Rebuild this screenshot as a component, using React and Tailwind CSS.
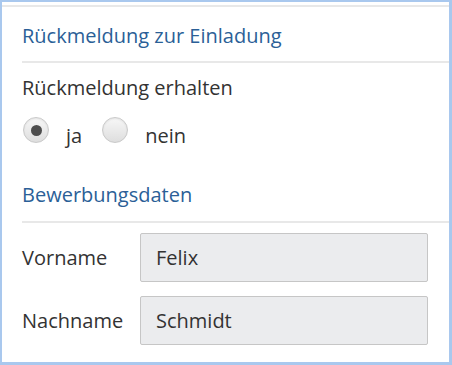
import React, { useState } from 'react';

const font = { fontFamily: '"Open Sans", "Noto Sans", sans-serif' };

function Radio({ checked, label, onClick }) {
  return (
    <button onClick={onClick} className="flex items-center">
      <span className="w-[26px] h-[26px] rounded-full border border-[#c9c9c9] bg-gradient-to-b from-[#f7f7f7] to-[#dedede] shadow-[inset_0_1px_2px_rgba(0,0,0,0.08)] flex items-center justify-center">
        {checked && <span className="w-[11px] h-[11px] rounded-full bg-[#4d4d4d]" />}
      </span>
      <span className="ml-[17px] translate-y-[6px] text-[20px] leading-[24px] text-[#333]">{label}</span>
    </button>
  );
}

function Field({ label, value }) {
  return (
    <div className="flex items-center">
      <span className="w-[118px] text-[20px] leading-[24px] text-[#333]">{label}</span>
      <div className="w-[288px] h-[49px] rounded-[2px] border border-[#c6c6c6] bg-[#ebecee] flex items-center px-[15px] text-[20px] leading-[24px] text-[#333]">
        {value}
      </div>
    </div>
  );
}

export default function App() {
  const [answer, setAnswer] = useState('ja');

  return (
    <div style={font} className="w-[452px] h-[365px] bg-white border-l-2 border-t-2 border-r-[3px] border-b-[3px] border-[#a9c8ee] overflow-hidden">
      <div className="mt-[3px] border-t-2 border-[#e8e8e8]">
        <div className="pl-[20px]">
          <h2 className="pt-[17px] pb-[13px] text-[20px] leading-[24px] text-[#2b5f97] border-b-2 border-[#e8e8e8]">
            Rückmeldung zur Einladung
          </h2>
          <p className="mt-[13px] text-[20px] leading-[24px] text-[#333]">Rückmeldung erhalten</p>
          <div className="mt-[17px] flex items-center gap-[20px] pl-[1px]">
            <Radio checked={answer === 'ja'} label="ja" onClick={() => setAnswer('ja')} />
            <Radio checked={answer === 'nein'} label="nein" onClick={() => setAnswer('nein')} />
          </div>
          <h2 className="mt-[40px] pb-[14px] text-[20px] leading-[24px] text-[#2b5f97] border-b-2 border-[#e8e8e8]">
            Bewerbungsdaten
          </h2>
          <div className="mt-[10px] flex flex-col gap-[14px]">
            <Field label="Vorname" value="Felix" />
            <Field label="Nachname" value="Schmidt" />
          </div>
        </div>
      </div>
    </div>
  );
}
